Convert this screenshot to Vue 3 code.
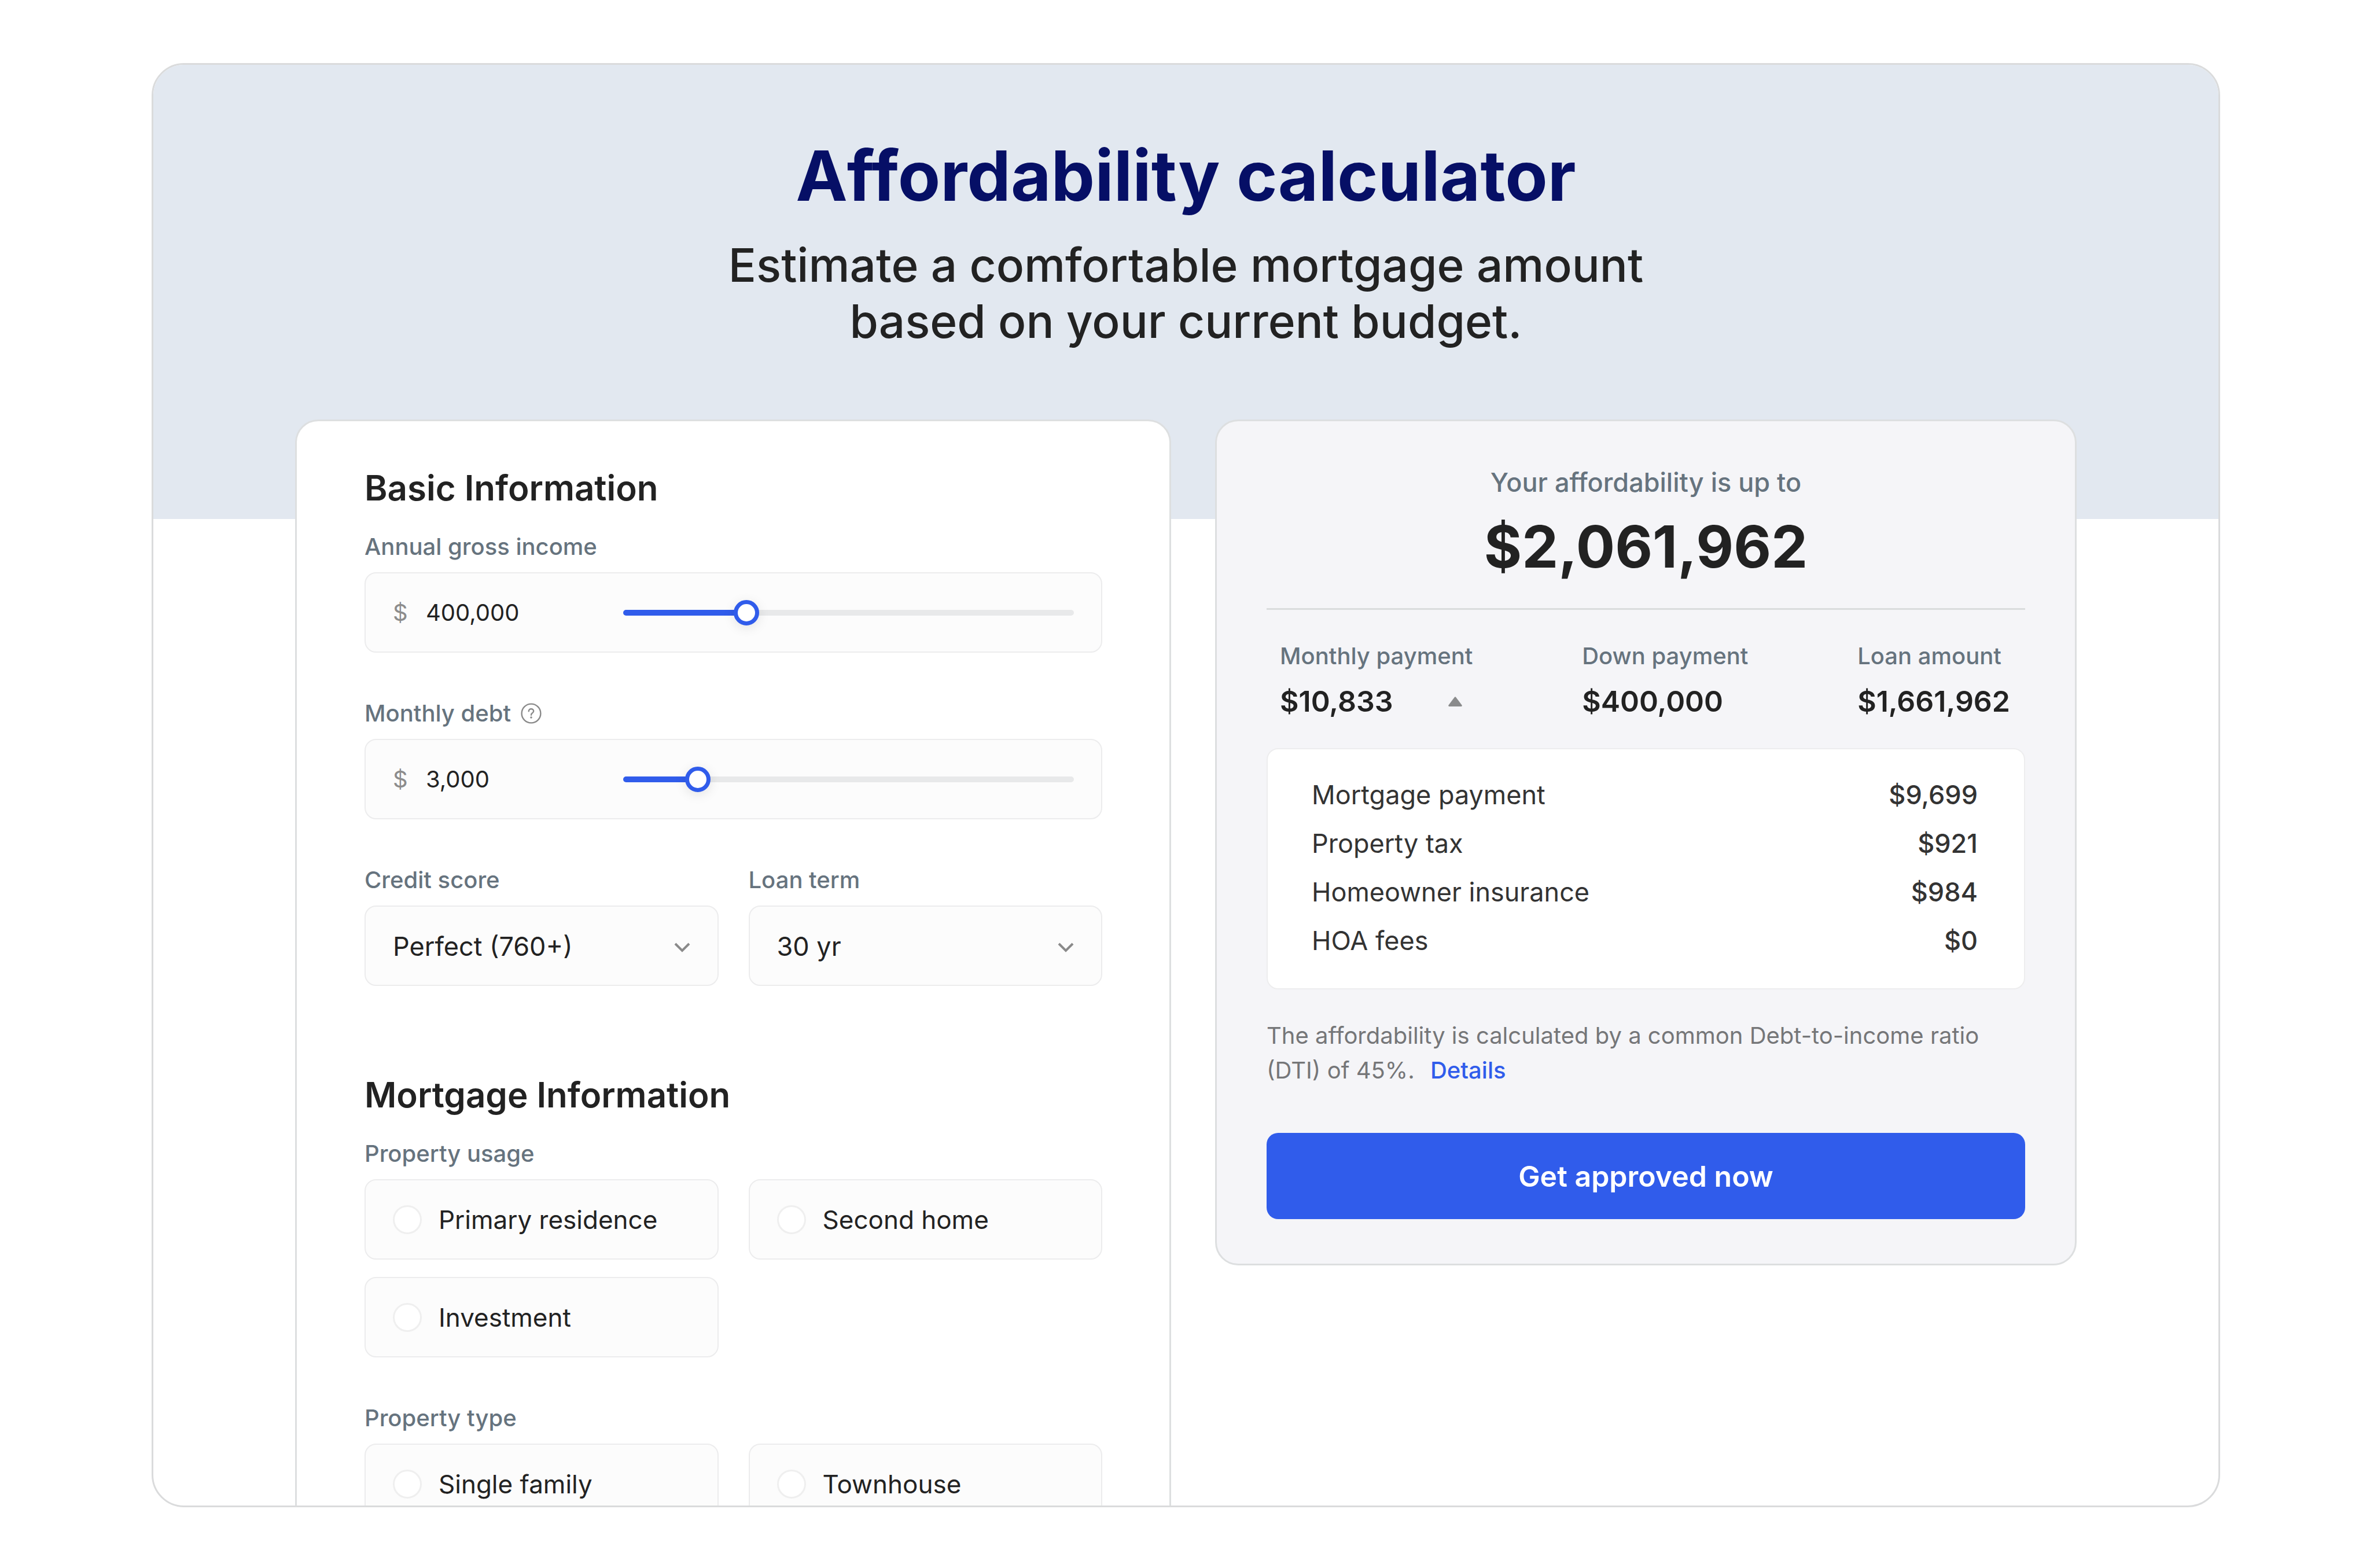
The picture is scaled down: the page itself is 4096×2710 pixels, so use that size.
<script setup>
import { ref } from 'vue'

const amounts = ref([
  { id: 'income', label: 'Annual gross income', value: 400000, max: 1540000, help: false },
  { id: 'debt', label: 'Monthly debt', value: 3000, max: 20600, help: true },
])

const format = (n) => Number(n).toLocaleString('en-US')

const onType = (field, event) => {
  const n = Number(event.target.value.replace(/[^\d]/g, ''))
  field.value = Math.min(n, field.max)
}

const creditScore = ref('Perfect (760+)')
const loanTerm = ref('30 yr')

const groups = [
  { name: 'usage', label: 'Property usage', options: ['Primary residence', 'Second home', 'Investment'] },
  { name: 'type', label: 'Property type', options: ['Single family', 'Townhouse'] },
]
const picked = ref({ usage: '', type: '' })

const breakdown = [
  ['Mortgage payment', '$9,699'],
  ['Property tax', '$921'],
  ['Homeowner insurance', '$984'],
  ['HOA fees', '$0'],
]
</script>

<template>
  <div class="page">
    <main class="frame">
      <header class="hero">
        <h1>Affordability calculator</h1>
        <p>Estimate a comfortable mortgage amount<br />based on your current budget.</p>
      </header>

      <div class="columns">
        <form class="card form-card" @submit.prevent>
          <section class="section">
            <h2>Basic Information</h2>
            <div class="fields">
              <div v-for="f in amounts" :key="f.id" class="field">
                <div class="label-row">
                  <label class="label" :for="f.id">{{ f.label }}</label>
                  <svg v-if="f.help" class="help" viewBox="0 0 36 36" aria-hidden="true">
                    <circle cx="18" cy="18" r="16.4" />
                    <path d="M13.8 14.2c0-2.4 1.800-4 4.200-4s4.200 1.600 4.200 3.800c0 1.800-1 2.700-2.300 3.600-1.300.900-1.900 1.500-1.900 3.100" />
                    <circle class="dot" cx="18" cy="25" r="1.8" />
                  </svg>
                </div>
                <div class="box amount">
                  <span class="prefix">$</span>
                  <input :id="f.id" class="amount-input" type="text" inputmode="numeric" :value="format(f.value)" @change="onType(f, $event)" />
                  <input
                    v-model.number="f.value"
                    class="slider"
                    type="range"
                    min="0"
                    :max="f.max"
                    :aria-label="f.label"
                    :style="{ '--ratio': f.value / f.max }"
                  />
                </div>
              </div>

              <div class="pair">
                <div class="field">
                  <label class="label" for="credit">Credit score</label>
                  <div class="select-wrap">
                    <select id="credit" v-model="creditScore" class="box select">
                      <option>Perfect (760+)</option>
                    </select>
                    <svg class="chevron" viewBox="0 0 30 18" aria-hidden="true"><path d="M3 3l12 12L27 3" /></svg>
                  </div>
                </div>
                <div class="field">
                  <label class="label" for="term">Loan term</label>
                  <div class="select-wrap">
                    <select id="term" v-model="loanTerm" class="box select">
                      <option>30 yr</option>
                    </select>
                    <svg class="chevron" viewBox="0 0 30 18" aria-hidden="true"><path d="M3 3l12 12L27 3" /></svg>
                  </div>
                </div>
              </div>
            </div>
          </section>

          <section class="section">
            <h2>Mortgage Information</h2>
            <div class="fields">
              <div v-for="g in groups" :key="g.name" class="field" role="radiogroup" :aria-labelledby="g.name">
                <span :id="g.name" class="label">{{ g.label }}</span>
                <div class="options">
                  <label v-for="o in g.options" :key="o" class="box option">
                    <input v-model="picked[g.name]" class="radio" type="radio" :name="g.name" :value="o" />
                    <span>{{ o }}</span>
                  </label>
                </div>
              </div>
            </div>
          </section>
        </form>

        <aside class="card result-card">
          <p class="lead">Your affordability is up to</p>
          <p class="total">$2,061,962</p>
          <hr class="rule" />
          <div class="stats">
            <div class="stat">
              <span class="label">Monthly payment</span>
              <div class="stat-row">
                <strong>$10,833</strong>
                <button class="toggle" type="button" aria-label="Hide breakdown">
                  <svg viewBox="0 0 24 17" aria-hidden="true"><path d="M10.8 1a1.6 1.6 0 0 1 2.4 0l10.200 13.400c.9 1.200.1 2.600-1.200 2.600H1.800C.5 17-.3 15.600.6 14.400z" /></svg>
                </button>
              </div>
            </div>
            <div class="stat">
              <span class="label">Down payment</span>
              <strong>$400,000</strong>
            </div>
            <div class="stat">
              <span class="label">Loan amount</span>
              <strong>$1,661,962</strong>
            </div>
          </div>
          <div class="breakdown">
            <table>
              <tbody>
                <tr v-for="[name, value] in breakdown" :key="name">
                  <th scope="row">{{ name }}</th>
                  <td>{{ value }}</td>
                </tr>
              </tbody>
            </table>
          </div>
          <p class="note">
            The affordability is calculated by a common Debt-to-income ratio (DTI) of 45%.
            <a href="#details">Details</a>
          </p>
          <button class="cta" type="button">Get approved now</button>
        </aside>
      </div>
    </main>
  </div>
</template>

<style>
body {
  margin: 0;
  background: #fff;
}
</style>

<style scoped>
* {
  box-sizing: border-box;
  margin: 0;
}

.page {
  display: flex;
  height: 100vh;
  padding: 109px 259px 105px 262px;
  font-family: Inter, "Liberation Sans", sans-serif;
  color: #222;
}

.frame {
  flex: 1;
  min-width: 0;
  overflow: hidden;
  border: 3px solid #dadbdc;
  border-radius: 56px;
  background: #fff;
}

.hero {
  padding: 120px 0 294px;
  background: #e2e8f0;
  text-align: center;
}

h1 {
  font-size: 120px;
  line-height: 144px;
  font-weight: 700;
  color: #060f66;
}

.hero p {
  margin-top: 33px;
  font-size: 80px;
  line-height: 97px;
  font-weight: 500;
}

.columns {
  display: grid;
  grid-template-columns: 1514fr 1489fr;
  gap: 76px;
  align-items: start;
  margin-top: -172px;
  padding: 0 245px;
}

.card {
  border: 3px solid #dddfe0;
  border-radius: 40px;
}

.form-card {
  display: flex;
  flex-direction: column;
  gap: 152px;
  padding: 79px 116px 79px 117px;
  background: #fff;
}

.section {
  display: flex;
  flex-direction: column;
  gap: 42px;
}

h2 {
  font-size: 60px;
  line-height: 72px;
  font-weight: 600;
}

.fields {
  display: flex;
  flex-direction: column;
  gap: 81px;
}

.field {
  display: flex;
  flex-direction: column;
  gap: 20px;
}

.label-row {
  display: flex;
  align-items: center;
  gap: 17px;
}

.label {
  font-size: 40px;
  line-height: 48px;
  font-weight: 500;
  color: #66737e;
}

.help {
  width: 36px;
  height: 36px;
  fill: none;
  stroke: #8a8a8a;
  stroke-width: 2.4;
  stroke-linecap: round;
}

.help .dot {
  fill: #8a8a8a;
  stroke: none;
}

.box {
  height: 139px;
  padding: 0 47px;
  border: 2px solid #ececed;
  border-radius: 20px;
  background: #fcfcfc;
  font-family: inherit;
  font-size: 44px;
  font-weight: 400;
  color: #222;
}

.amount {
  display: flex;
  align-items: center;
  font-size: 40px;
}

.prefix {
  width: 57px;
  color: #8c8c8c;
}

.amount-input {
  width: 341px;
  padding: 0;
  border: 0;
  outline: 0;
  background: none;
  font: inherit;
  color: inherit;
}

.slider {
  --thumb: 44px;
  --fill: calc(var(--thumb) / 2 + (100% - var(--thumb)) * var(--ratio));
  flex: 1;
  min-width: 0;
  height: 44px;
  appearance: none;
  background: none;
  outline: 0;
}

.slider::-webkit-slider-runnable-track {
  height: 10px;
  border-radius: 5px;
  background: linear-gradient(to right, #305ceb var(--fill), #e8e9ea var(--fill));
}

.slider::-webkit-slider-thumb {
  appearance: none;
  width: 44px;
  height: 44px;
  margin-top: -17px;
  border: 7px solid #305ceb;
  border-radius: 50%;
  background: #fff;
  box-shadow: 0 4px 20px rgba(0, 0, 0, 0.1);
}

.pair,
.options {
  display: grid;
  grid-template-columns: 1fr 1fr;
  column-gap: 52px;
  row-gap: 30px;
}

.select-wrap {
  position: relative;
}

.select {
  display: block;
  width: 100%;
  padding-top: 2px;
  font-size: 45px;
  appearance: none;
}

.chevron {
  position: absolute;
  top: 63px;
  right: 48px;
  width: 30px;
  height: 18px;
  fill: none;
  stroke: #8a8a8a;
  stroke-width: 4;
  pointer-events: none;
}

.option {
  display: flex;
  align-items: center;
  gap: 29px;
}

.radio {
  appearance: none;
  width: 50px;
  height: 50px;
  border: 3px solid #efefef;
  border-radius: 50%;
  background: #fff;
}

.radio:checked {
  border: 14px solid #305ceb;
}

.result-card {
  padding: 79px 86px 77px;
  background: #f5f5f8;
}

.lead {
  font-size: 45px;
  line-height: 54px;
  font-weight: 500;
  text-align: center;
  color: #66737e;
}

.total {
  margin-top: 23px;
  font-size: 100px;
  line-height: 122px;
  font-weight: 700;
  text-align: center;
}

.rule {
  height: 3px;
  margin: 45px 0 56px;
  border: 0;
  background: #dadcdd;
}

.stats {
  display: flex;
  justify-content: space-between;
  padding: 0 26px 0 23px;
}

.stat {
  display: flex;
  flex-direction: column;
  gap: 24px;
}

.stat-row {
  display: flex;
  align-items: center;
  justify-content: space-between;
  padding-right: 18px;
}

strong {
  font-size: 50px;
  line-height: 60px;
  font-weight: 600;
}

.toggle {
  display: flex;
  padding: 0;
  border: 0;
  background: none;
}

.toggle svg {
  width: 24px;
  height: 17px;
  fill: #8a8b8c;
}

.breakdown {
  margin-top: 51px;
  padding: 37px 80px 40px 76px;
  border: 2px solid #ededee;
  border-radius: 20px;
  background: #fff;
}

table {
  width: 100%;
  border-collapse: collapse;
  font-size: 45px;
  line-height: 84px;
  color: #333;
}

th,
td {
  padding: 0;
  font-weight: 400;
  text-align: left;
}

td {
  font-weight: 500;
  text-align: right;
}

.note {
  margin-top: 50px;
  font-size: 40px;
  line-height: 60px;
  color: #757678;
}

.note a {
  margin-left: 16px;
  font-weight: 500;
  text-decoration: none;
  color: #305ceb;
}

.cta {
  display: block;
  width: 100%;
  height: 149px;
  margin-top: 78px;
  border: 0;
  border-radius: 20px;
  background: #305ceb;
  font-family: inherit;
  font-size: 50px;
  font-weight: 600;
  color: #fff;
}
</style>
